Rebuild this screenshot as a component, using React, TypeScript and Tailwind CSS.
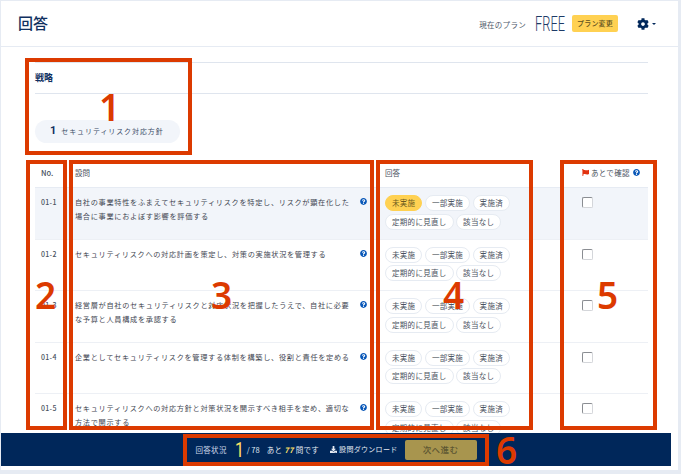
import type { ReactNode } from 'react';
import { FaCog, FaFlag, FaQuestionCircle, FaDownload } from 'react-icons/fa';

const questions: { no: string; text: ReactNode; selected?: boolean }[] = [
  { no: '01-1', text: '自社の事業特性をふまえてセキュリティリスクを特定し、リスクが顕在化した場合に事業におよぼす影響を評価する', selected: true },
  { no: '01-2', text: 'セキュリティリスクへの対応計画を策定し、対策の実施状況を管理する' },
  {
    no: '01-3',
    text: (
      <>
        経営層が自社のセキュリティリスクと<span className="tracking-[-7.5px]">、</span>対応状況を把握したうえで、自社に必要な予算と人員構成を承認する
      </>
    ),
  },
  { no: '01-4', text: '企業としてセキュリティリスクを管理する体制を構築し、役割と責任を定める' },
  { no: '01-5', text: 'セキュリティリスクへの対応方針と対策状況を開示すべき相手を定め、適切な方法で開示する' },
];

const answers = ['未実施', '一部実施', '実施済', '定期的に見直し', '該当なし'];

function Chip({ label, active }: { label: string; active?: boolean }) {
  return (
    <span
      className={
        active
          ? 'flex h-4 items-center rounded-full border border-[#ffd152] bg-[#ffd152] px-[6px] text-[7.5px] tracking-[0.3px] text-[#6b5a20]'
          : 'flex h-4 items-center rounded-full border border-[#e6ebf2] bg-white px-[6px] text-[7.5px] tracking-[0.3px] text-[#4a5260]'
      }
    >
      {label}
    </span>
  );
}

function Row({ q }: { q: (typeof questions)[number] }) {
  return (
    <div className={`grid h-[51.5px] shrink-0 grid-cols-[40px_310px_197px_66px] border-b border-[#edf0f5] ${q.selected ? 'bg-[#f2f5fa]' : 'bg-white'}`}>
      <div className="pl-[6px] pt-[7px] text-[7px] font-medium leading-[14px] tracking-[0.3px] text-[#4a5260]">{q.no}</div>
      <div className="flex justify-between pr-[18px] pt-[7px]">
        <p className="w-[280px] text-[7.2px] leading-[14px] tracking-[0.68px] text-[#3f4652]">{q.text}</p>
        <FaQuestionCircle className="mt-[3px] size-[7px] shrink-0 text-[#0a58b8]" />
      </div>
      <div className="flex w-[130px] flex-wrap content-start gap-[2.5px] pt-[7px]">
        {answers.map((a, i) => (
          <Chip key={a} label={a} active={q.selected && i === 0} />
        ))}
      </div>
      <div className="pt-[9px]">
        <span className="block size-[11px] rounded-[2px] border border-[#d4d6da] border-l-[#8a8d92] border-t-[#8a8d92] bg-white" />
      </div>
    </div>
  );
}

export default function App() {
  return (
    <div className="relative h-[474px] w-[681px] overflow-hidden bg-[#e6ebf3] pb-[4px] pl-px pr-[3px] pt-px font-['Noto_Sans_CJK_JP','Noto_Sans',sans-serif]">
      <div className="h-full overflow-hidden bg-white">
        <header className="flex h-[46px] items-center justify-between border-b border-[#e6ebf3] pl-[17px] pr-[22px]">
          <h1 className="text-[15px] font-medium text-[#10305f]">回答</h1>
          <div className="flex items-center">
            <span className="mt-[3px] text-[7.5px] tracking-[0.3px] text-[#4f5a6b]">現在のプラン</span>
            <span className="ml-[3px] w-[34px] origin-center scale-x-[0.64] text-center font-['Roboto',sans-serif] text-[20px] font-light leading-none text-[#1d3a66]">FREE</span>
            <span className="ml-[9px] flex h-[17px] w-[46px] items-center justify-center rounded-[2px] bg-[#ffd152] text-[7px] font-medium tracking-[0.2px] text-[#5d5020]">プラン変更</span>
            <FaCog className="ml-[19px] size-[12px] text-[#00275a]" />
            <span className="ml-[3px] size-0 border-x-[2px] border-t-[2.5px] border-x-transparent border-t-[#00275a]" />
          </div>
        </header>

        <main className="pl-[34px] pr-[30px] pt-[15px]">
          <div className="flex h-[32px] items-center border-y border-[#dfe5ee]">
            <h2 className="text-[9px] font-bold text-[#10305f]">戦略</h2>
          </div>
          <div className="mt-[26px] flex h-[23px] w-[145px] items-center rounded-full bg-[#f2f5fa] pl-[15px]">
            <span className="font-['Roboto',sans-serif] text-[11px] font-bold text-[#10305f]">1</span>
            <span className="ml-[5px] text-[7px] tracking-[0.9px] text-[#3c4d68]">セキュリティリスク対応方針</span>
          </div>

          <div className="mt-[14px] grid h-[31px] grid-cols-[40px_310px_197px_66px] items-center border-b border-[#e6ebf3] pt-px text-[7.5px] text-[#4a5260]">
            <span className="pl-[6px] font-medium">No.</span>
            <span>設問</span>
            <span>回答</span>
            <span className="flex items-center gap-[2px]">
              <FaFlag className="size-[7px] text-[#e2320f]" />
              <span className="tracking-[0.3px]">あとで確認</span>
              <FaQuestionCircle className="ml-[1px] size-[7px] text-[#0a58b8]" />
            </span>
          </div>

          <div className="flex flex-col">
            {questions.map((q) => (
              <Row key={q.no} q={q} />
            ))}
          </div>
        </main>
      </div>

      {/* fixed bar sits over the table */}
      <div className="absolute bottom-[8px] left-px flex h-[33px] w-[670px] items-center justify-center gap-[6px] bg-[#00275a] text-white">
        <span className="text-[7.5px] tracking-[0.3px] text-[#cfd9ea]">回答状況</span>
        <span className="ml-[1px] w-[10px] scale-x-[0.8] text-center font-['Roboto',sans-serif] text-[20px] leading-none text-[#ffe066]">1</span>
        <span className="-ml-[3px] text-[7.5px] text-[#dfe6f1]">/ 78</span>
        <span className="ml-px text-[7.5px] tracking-[0.3px] text-[#e6ebf3]">
          あと <b className="italic text-[#ffe066]">77</b> 問です
        </span>
        <span className="ml-[5px] flex items-center gap-[2px] text-[7px] tracking-[0.3px] text-[#e6ebf3]">
          <FaDownload className="size-[7px]" />
          設問ダウンロード
        </span>
        <span className="ml-[1px] flex h-[20px] w-[72px] items-center justify-center rounded-[2px] bg-[#a8954e] text-[8.5px] font-medium tracking-[0.4px] text-[#5c5632]">次へ進む</span>
      </div>

      {/* annotation overlay */}
      <div className="absolute left-[25px] top-[58px] h-[97px] w-[167px] border-[4px] border-[#dc3a00]" />
      <div className="absolute left-[26px] top-[160px] h-[270px] w-[41px] border-[4px] border-[#dc3a00]" />
      <div className="absolute left-[69px] top-[160px] h-[270px] w-[305px] border-[4px] border-[#dc3a00]" />
      <div className="absolute left-[376px] top-[160px] h-[270px] w-[157px] border-[4px] border-[#dc3a00]" />
      <div className="absolute left-[560px] top-[160px] h-[270px] w-[97px] border-[4px] border-[#dc3a00]" />
      <div className="absolute left-[183px] top-[434px] h-[32px] w-[306px] border-[4px] border-[#dc3a00]" />
      {[
        { n: '1', c: 'left-[99px] top-[85px]' },
        { n: '2', c: 'left-[35px] top-[273px]' },
        { n: '3', c: 'left-[211px] top-[273px]' },
        { n: '4', c: 'left-[443px] top-[273px]' },
        { n: '5', c: 'left-[597px] top-[273px]' },
        { n: '6', c: 'left-[496px] top-[428px]' },
      ].map(({ n, c }) => (
        <span key={n} className={`absolute font-['Noto_Sans',sans-serif] text-[37px] font-semibold leading-[44px] text-[#dc3a00] ${c}`}>
          {n}
        </span>
      ))}
    </div>
  );
}
